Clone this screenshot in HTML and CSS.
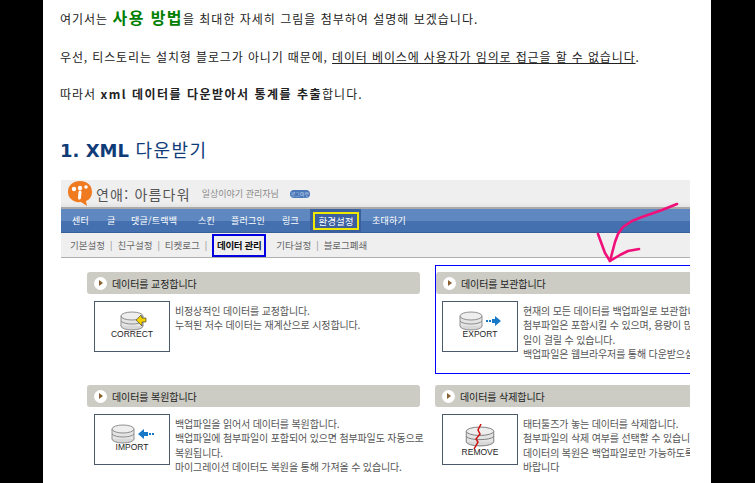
FILE: index.html
```html
<!DOCTYPE html>
<html lang="ko">
<head>
<meta charset="utf-8">
<title>XML 다운받기</title>
<link rel="stylesheet" href="styles.css">
</head>
<body>
<main class="page">
  <p class="para">여기서는 <strong class="green">사용 방법</strong>을 최대한 자세히 그림을 첨부하여 설명해 보겠습니다.</p>
  <p class="para tight">우선, 티스토리는 설치형 블로그가 아니기 때문에, <u>데이터 베이스에 사용자가 임의로 접근을 할 수 없습니다</u>.</p>
  <p class="para">따라서 <strong class="key">xml 데이터를 다운받아서 통계를 추출</strong>합니다.</p>
  <h2 class="heading"><b>1. XML</b> 다운받기</h2>
  <figure class="shot">
    <header class="brand">
      <svg class="logo" width="26" height="27" viewBox="0 0 26 27">
        <path d="M1 12C1 5 6 1 13 1C20 1 25 5 25 12C25 17 22 20 19 21L20 26L14 22C6 23 1 18 1 12Z" fill="#f07a20"/>
        <circle cx="7" cy="9" r="2.2" fill="#fff"/><circle cx="13" cy="8" r="2.2" fill="#fff"/><circle cx="19" cy="7" r="1.8" fill="#fff"/>
        <path d="M13 12L12.5 18" stroke="#fff" stroke-width="3" stroke-linecap="round"/>
      </svg>
      <span class="brand-title">연애: 아름다워</span>
      <span class="brand-sub">일상이야기 관리자님</span>
      <span class="pill">로그아웃</span>
    </header>
    <nav class="menu">
      <span class="m1">센터</span><span class="m2">글</span><span class="m3">댓글/트랙백</span><span class="m4">스킨</span><span class="m5">플러그인</span><span class="m6">링크</span>
      <span class="m7"><span class="yellow">환경설정</span></span><span class="m8">초대하기</span>
    </nav>
    <nav class="submenu">
      <span>기본설정</span><i>|</i><span>친구설정</span><i>|</i><span>티켓로그</span><i>|</i><span class="current">데이터 관리</span><span>기타설정</span><i>|</i><span>블로그폐쇄</span>
    </nav>
    <div class="cards">
      <section class="card">
        <h3 class="bar"><span class="dot"></span>데이터를 교정합니다</h3>
        <div class="body">
          <div class="thumb">
            <svg width="48" height="20" viewBox="0 0 48 20"><use href="#db" x="12"/><path d="M28 9l5-5 1 3h4v4h-4v4z" fill="#f0d000" stroke="#333" stroke-width=".6"/></svg>
            <span>CORRECT</span>
          </div>
          <p>비정상적인 데이터를 교정합니다.<br>누적된 저수 데이터는 재계산으로 시정합니다.</p>
        </div>
      </section>
      <section class="card picked">
        <h3 class="bar"><span class="dot"></span>데이터를 보관합니다</h3>
        <div class="body">
          <div class="thumb">
            <svg width="48" height="20" viewBox="0 0 48 20"><use href="#db" x="3"/><path d="M30 9h2v2h-2zM33 9h2v2h-2zM36 8h3V5l6 5-6 5v-3h-3z" fill="#1878c8"/></svg>
            <span>EXPORT</span>
          </div>
          <p>현재의 모든 데이터를 백업파일로 보관합니다.<br>첨부파일은 포함시킬 수 있으며, 용량이 많을 경우<br>일이 걸릴 수 있습니다.<br>백업파일은 웹브라우저를 통해 다운받으실 수 있습니다.</p>
        </div>
      </section>
      <section class="card">
        <h3 class="bar"><span class="dot"></span>데이터를 복원합니다</h3>
        <div class="body">
          <div class="thumb">
            <svg width="48" height="20" viewBox="0 0 48 20"><use href="#db" x="3"/><path d="M30 10l6-5v3h4v4h-4v3zM41 9h2v2h-2zM44 9h2v2h-2z" fill="#1878c8"/></svg>
            <span>IMPORT</span>
          </div>
          <p>백업파일을 읽어서 데이터를 복원합니다.<br>백업파일에 첨부파일이 포함되어 있으면 첨부파일도 자동으로<br>복원됩니다.<br>마이그레이션 데이터도 복원을 통해 가져올 수 있습니다.</p>
        </div>
      </section>
      <section class="card">
        <h3 class="bar"><span class="dot"></span>데이터를 삭제합니다</h3>
        <div class="body">
          <div class="thumb">
            <svg width="48" height="25" viewBox="0 0 48 25"><use href="#db" transform="translate(9 2) scale(1.25 1.05)"/><path d="M25 0l-3 6 2 4-4 5 2 3-4 7" fill="none" stroke="#d01010" stroke-width="1.5"/></svg>
            <span>REMOVE</span>
          </div>
          <p>태터툴즈가 놓는 데이터를 삭제합니다.<br>첨부파일의 삭제 여부를 선택할 수 있습니다.<br>데이터의 복원은 백업파일로만 가능하도록<br>바랍니다</p>
        </div>
      </section>
    </div>
    <svg class="scribble" width="629" height="100" viewBox="0 0 629 100">
      <path d="M616 24L601 30L581 37L571 41L562 47L557 54L554 62L549 81" fill="none"/>
      <path d="M537 54L544 73L549 81L559 75L567 71L578 69" fill="none"/>
    </svg>
    <svg width="0" height="0" class="defs">
      <defs>
        <g id="db">
          <ellipse cx="12" cy="15" rx="11" ry="4" fill="#d8d8d8" stroke="#777" stroke-width=".8"/>
          <rect x="1" y="5" width="22" height="10" fill="#e4e4e4"/>
          <path d="M1 5v10M23 5v10M1 10c3 4 19 4 22 0" fill="none" stroke="#777" stroke-width=".8"/>
          <ellipse cx="12" cy="5" rx="11" ry="4" fill="#eee" stroke="#777" stroke-width=".8"/>
        </g>
      </defs>
    </svg>
  </figure>
</main>
</body>
</html>
```
FILE: styles.css
```css
* { box-sizing: border-box; }
html, body { margin: 0; height: 100%; background: #000; overflow: hidden; }
body { font-family: "Noto Sans CJK KR", "Liberation Sans", sans-serif; }
.page {
  width: 668px;
  height: 483px;
  margin-left: 43px;
  padding: 7px 21px 0 17px;
  background: #fff;
  color: #222;
  overflow: hidden;
}
.para { margin: 0 0 17.5px; font-size: 12px; line-height: 20px; letter-spacing: 1px; white-space: nowrap; }
.tight { letter-spacing: .87px; }
.para strong { font-weight: 700; }
.key { letter-spacing: 1.5px; }
.green { color: #008000; font-size: 16px; letter-spacing: 1.4px; line-height: 20px; }
.heading {
  margin: 32px 0 16px;
  font-size: 18px;
  line-height: 26px;
  letter-spacing: 1.5px;
  font-weight: 400;
  color: #0f3c78;
}
.heading b { font-family: "DejaVu Sans", sans-serif; font-size: 18px; font-weight: 700; letter-spacing: 0; }
.shot { position: relative; margin: 0 0 0 1px; width: 629px; height: 303px; overflow: hidden; background: #fff; font-size: 10px; color: #555; }
.brand { display: flex; align-items: center; height: 27px; background: linear-gradient(#efefef 80%, #e4e4e4); padding-left: 6px; }
.logo { flex: none; }
.brand-title { margin-left: 3px; font-size: 14px; color: #555; letter-spacing: 1.2px; white-space: nowrap; }
.brand-sub { margin-left: 11px; font-size: 9px; color: #888; white-space: nowrap; }
.pill { margin-left: 11px; padding: 0 1px; height: 8px; line-height: 8px; border-radius: 4px; background: #4a78b8; color: #cde; font-size: 5px; white-space: nowrap; }
.menu {
  display: flex;
  align-items: center;
  height: 26px;
  border-top: 2px solid #aaa;
  border-bottom: 1px solid #3a609c;
  background: linear-gradient(#6088c0 50%, #4470b0 50%);
  color: #fff;
  padding-left: 11px;
  font-size: 9px;
  letter-spacing: .2px;
}
.menu > span { white-space: nowrap; }
.m1 { width: 35px; }
.m2 { width: 24px; }
.m3 { width: 67px; }
.m4 { width: 33px; }
.m5 { width: 51px; }
.m6 { width: 28px; }
.m7 { width: 51px; height: 24px; padding: 3px; background: #3c5f9e; }
.m8 { margin-left: 11px; }
.yellow { display: block; width: 46px; height: 18px; line-height: 14px; border: 2px solid #f0e800; text-align: center; font-size: 9.5px; letter-spacing: 0; }
.submenu {
  display: flex;
  align-items: center;
  height: 25px;
  background: #efefef;
  border-bottom: 1px solid #b0b0b0;
  padding-left: 9px;
  color: #666;
  font-size: 9.5px;
}
.submenu span { white-space: nowrap; }
.submenu i { margin: 0 5px; font-style: normal; color: #888; font-size: 9px; }
.submenu .current { width: 54px; height: 23px; margin-right: 10px; line-height: 18px; border: 2px solid #0000e0; color: #111; font-weight: 700; text-align: center; letter-spacing: -.3px; }
.cards { display: grid; grid-template-columns: 333px 340px; column-gap: 15px; margin: 7px 0 0 26px; }
.card { height: 113px; padding-top: 7px; }
.picked { box-shadow: inset 2px 0 0 -1px #0000ff, inset 0 0 0 1px #0000ff; height: 109px; }
.bar { display: flex; align-items: center; height: 22px; margin: 0; padding-left: 7px; border-radius: 3px; background: #cccbc4; color: #222; font-size: 10px; font-weight: 400; letter-spacing: -.1px; }
.picked .bar { margin-left: 1px; }
.dot { width: 13px; height: 13px; margin-right: 5px; border-radius: 50%; background: #fff; position: relative; }
.dot::after { content: ""; position: absolute; left: 5px; top: 3px; border-left: 4px solid #8a6030; border-top: 3.5px solid transparent; border-bottom: 3.5px solid transparent; }
.body { display: flex; gap: 5px; margin: 7px 0 0 7px; }
.thumb { display: flex; flex-direction: column; align-items: center; flex: none; width: 76px; height: 51px; padding-top: 9px; background: #fff; border: 1px solid #4a5a6a; }
.thumb svg { flex: none; }
.thumb span { margin-top: -2px; font-family: "Liberation Sans", sans-serif; font-size: 8.5px; line-height: 10px; color: #222; }
.body p { margin: 3px 0 0; font-size: 10px; line-height: 14.3px; letter-spacing: -.15px; color: #555; white-space: nowrap; }
.scribble { position: absolute; left: 0; top: 0; stroke: #f0107a; stroke-width: 2.6; stroke-linecap: round; stroke-linejoin: round; }
.defs { position: absolute; }
```
